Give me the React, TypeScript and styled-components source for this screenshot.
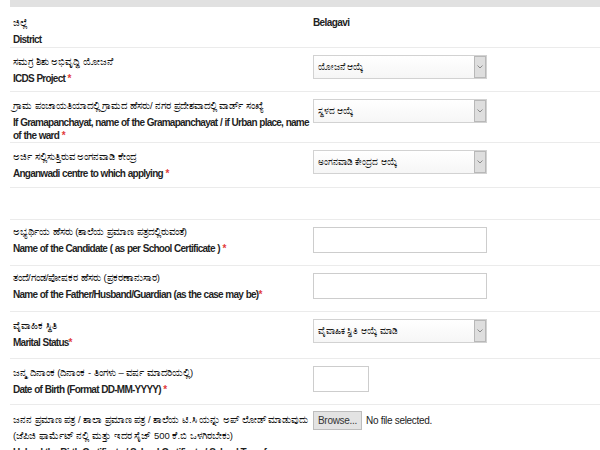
import React from 'react'
import styled, {createGlobalStyle} from 'styled-components'

const GlobalStyle = createGlobalStyle`
  body {
    margin: 0;
    background: #fff;
    color: #222;
    font-family: "Liberation Sans", Arial, sans-serif;
  }
`

const Page = styled.div`
  padding-left: 10px;
  height: 450px;
  overflow: hidden;
`

const TopBar = styled.div`
  height: 7px;
  background: #e1e1e1;
`

const Row = styled.div<{$h?: number}>`
  display: grid;
  grid-template-columns: 303px 1fr;
  box-sizing: border-box;
  height: ${p => (p.$h ? p.$h + 'px' : 'auto')};
  border-bottom: 1px solid #ebebeb;
`

const Label = styled.div<{$top?: number}>`
  padding: ${p => p.$top ?? 6}px 0 0 3px;
`

const Kn = styled.div`
  font-size: 9.5px;
  line-height: 16px;
  color: #111;
`

const En = styled.div`
  margin-top: 2px;
  font-size: 10px;
  font-weight: bold;
  letter-spacing: -0.75px;
  word-spacing: 0.5px;
  line-height: 13px;
  color: #1f1f1f;
`

const Req = styled.span`
  color: #e23b3b;
`

const Cell = styled.div<{$top?: number}>`
  padding-top: ${p => p.$top ?? 7}px;
`

const Value = styled.div`
  font-size: 10px;
  font-weight: bold;
  letter-spacing: -0.6px;
  line-height: 16px;
`

const Select = styled.div`
  display: flex;
  box-sizing: border-box;
  width: 174px;
  height: 24px;
  border: 1px solid #d2d2d2;
  background: linear-gradient(#fff, #f6f6f6);
`

const SelectText = styled.span`
  flex: 1;
  padding-left: 4px;
  font-size: 8.5px;
  line-height: 22px;
  color: #1a1a1a;
`

const Arrow = styled.span`
  display: flex;
  align-items: center;
  justify-content: center;
  box-sizing: border-box;
  width: 12px;
  border: 1px solid #b8b8b8;
  background: #dedede;
`

const TextBox = styled.input<{$w?: number}>`
  display: block;
  box-sizing: border-box;
  width: ${p => p.$w ?? 174}px;
  height: 26px;
  margin: 0;
  border: 1px solid #cdcdcd;
  background: #fff;
`

const FileRow = styled.div`
  display: flex;
  align-items: center;
  gap: 4px;
  font-size: 10px;
  letter-spacing: -0.3px;
  color: #222;
`

const Browse = styled.span`
  box-sizing: border-box;
  width: 49px;
  height: 19px;
  border: 1px solid #bdbdbd;
  background: #e3e3e3;
  font-size: 10px;
  line-height: 17px;
  text-align: center;
  color: #333;
`

const Chevron = () => (
  <svg width="6" height="4" viewBox="0 0 6 4">
    <path d="M0.5 0.5 L3 3 L5.5 0.5" fill="none" stroke="#8a8a8a" strokeWidth="1" />
  </svg>
)

const Dropdown = ({text}: {text: string}) => (
  <Select>
    <SelectText>{text}</SelectText>
    <Arrow><Chevron /></Arrow>
  </Select>
)

export default function App() {
  return (
    <Page>
      <GlobalStyle />
      <TopBar />

      <Row $h={41}>
        <Label $top={8}>
          <Kn>ಜಿಲ್ಲೆ</Kn>
          <En>District</En>
        </Label>
        <Cell $top={8}><Value>Belagavi</Value></Cell>
      </Row>

      <Row $h={44}>
        <Label>
          <Kn>ಸಮಗ್ರ ಶಿಶು ಅಭಿವೃದ್ಧಿ ಯೋಜನೆ</Kn>
          <En>ICDS Project <Req>*</Req></En>
        </Label>
        <Cell><Dropdown text="ಯೋಜನೆ ಆಯ್ಕೆ" /></Cell>
      </Row>

      <Row $h={51}>
        <Label>
          <Kn>ಗ್ರಾಮ ಪಂಚಾಯತಿಯಾದಲ್ಲಿ ಗ್ರಾಮದ ಹೆಸರು/ ನಗರ ಪ್ರದೇಶವಾದಲ್ಲಿ ವಾರ್ಡ್ ಸಂಖ್ಯೆ</Kn>
          <En>If Gramapanchayat, name of the Gramapanchayat / if Urban place, name of the ward <Req>*</Req></En>
        </Label>
        <Cell><Dropdown text="ಸ್ಥಳದ ಆಯ್ಕೆ" /></Cell>
      </Row>

      <Row $h={45}>
        <Label>
          <Kn>ಅರ್ಜಿ ಸಲ್ಲಿಸುತ್ತಿರುವ ಅಂಗನವಾಡಿ ಕೇಂದ್ರ</Kn>
          <En>Anganwadi centre to which applying <Req>*</Req></En>
        </Label>
        <Cell><Dropdown text="ಅಂಗನವಾಡಿ ಕೇಂದ್ರದ ಆಯ್ಕೆ" /></Cell>
      </Row>

      <Row $h={32} />

      <Row $h={46}>
        <Label $top={4}>
          <Kn>ಅಭ್ಯರ್ಥಿಯ ಹೆಸರು (ಶಾಲೆಯ ಪ್ರಮಾಣ ಪತ್ರದಲ್ಲಿರುವಂತೆ)</Kn>
          <En>Name of the Candidate ( as per School Certificate ) <Req>*</Req></En>
        </Label>
        <Cell><TextBox readOnly /></Cell>
      </Row>

      <Row $h={46}>
        <Label $top={4}>
          <Kn>ತಂದೆ/ಗಂಡ/ಪೋಷಕರ ಹೆಸರು (ಪ್ರಕರಣಾನುಸಾರ)</Kn>
          <En>Name of the Father/Husband/Guardian (as the case may be)<Req>*</Req></En>
        </Label>
        <Cell><TextBox readOnly /></Cell>
      </Row>

      <Row $h={47}>
        <Label>
          <Kn>ವೈವಾಹಿಕ ಸ್ಥಿತಿ</Kn>
          <En>Marital Status<Req>*</Req></En>
        </Label>
        <Cell><Dropdown text="ವೈವಾಹಿಕ ಸ್ಥಿತಿ ಆಯ್ಕೆ ಮಾಡಿ" /></Cell>
      </Row>

      <Row $h={46}>
        <Label>
          <Kn>ಜನ್ಮ ದಿನಾಂಕ (ದಿನಾಂಕ - ತಿಂಗಳು – ವರ್ಷ ಮಾದರಿಯಲ್ಲಿ)</Kn>
          <En>Date of Birth (Format DD-MM-YYYY) <Req>*</Req></En>
        </Label>
        <Cell><TextBox readOnly $w={56} /></Cell>
      </Row>

      <Row>
        <Label $top={7}>
          <Kn>
            ಜನನ ಪ್ರಮಾಣ ಪತ್ರ / ಶಾಲಾ ಪ್ರಮಾಣ ಪತ್ರ / ಶಾಲೆಯ ಟಿ.ಸಿ ಯನ್ನು ಅಪ್ ಲೋಡ್ ಮಾಡುವುದು<br />
            (ಜೆಪಿಜಿ ಫಾರ್ಮೆಟ್ ನಲ್ಲಿ ಮತ್ತು ಇದರ ಸೈಜ್ 500 ಕೆ.ಬಿ ಒಳಗಿರಬೇಕು)
          </Kn>
          <En>Upload the Birth Certificate / School Certificate / School Transfer Certificate</En>
        </Label>
        <Cell $top={6}>
          <FileRow>
            <Browse>Browse...</Browse>
            No file selected.
          </FileRow>
        </Cell>
      </Row>
    </Page>
  )
}
